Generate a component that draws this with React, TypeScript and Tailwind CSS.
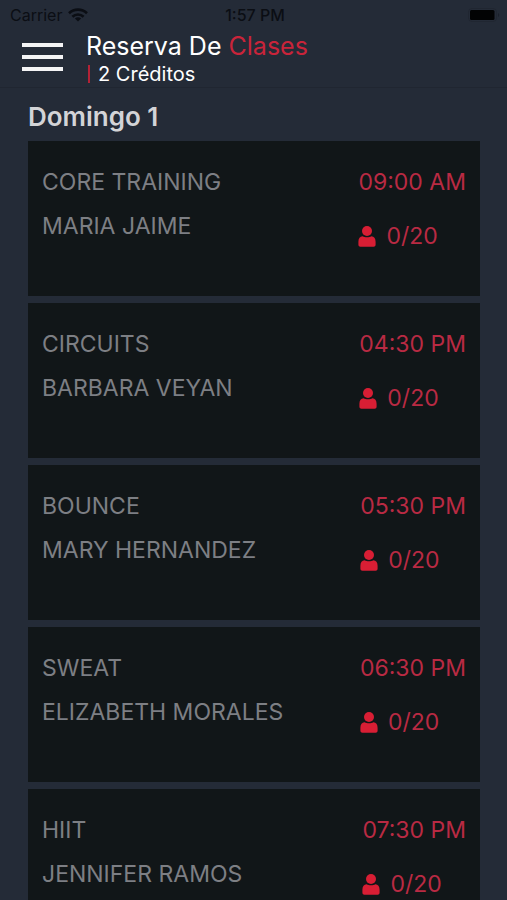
type GymClass = {
  name: string;
  coach: string;
  time: string;
  taken: number;
  capacity: number;
};

const classes: GymClass[] = [
  { name: "CORE TRAINING", coach: "MARIA JAIME", time: "09:00 AM", taken: 0, capacity: 20 },
  { name: "CIRCUITS", coach: "BARBARA VEYAN", time: "04:30 PM", taken: 0, capacity: 20 },
  { name: "BOUNCE", coach: "MARY HERNANDEZ", time: "05:30 PM", taken: 0, capacity: 20 },
  { name: "SWEAT", coach: "ELIZABETH MORALES", time: "06:30 PM", taken: 0, capacity: 20 },
  { name: "HIIT", coach: "JENNIFER RAMOS", time: "07:30 PM", taken: 0, capacity: 20 },
];

function WifiIcon() {
  return (
    <svg viewBox="0 0 20 14" className="h-[14px] w-5" fill="none" stroke="currentColor" strokeWidth="2.6">
      <path d="M1 5.2a13 13 0 0 1 18 0" />
      <path d="M4.4 8.8a8.1 8.1 0 0 1 11.2 0" />
      <path d="M10 13.6 6.9 10.6a4.4 4.4 0 0 1 6.2 0Z" fill="currentColor" stroke="none" />
    </svg>
  );
}

function BatteryIcon() {
  return (
    <svg viewBox="0 0 32 14" className="h-[14px] w-8" fill="none">
      <rect x="0.5" y="0.5" width="28" height="13" rx="3.5" stroke="#202631" />
      <rect x="2" y="2" width="24.5" height="10" rx="1.5" fill="#020304" />
      <path d="M30 5v4c1.6-.5 1.6-3.5 0-4Z" fill="#1b212c" />
    </svg>
  );
}

function PersonIcon() {
  return (
    <svg viewBox="0 0 18 21" className="h-[21px] w-[18px]" fill="#d81e34">
      <circle cx="9" cy="5" r="5" />
      <path d="M4.600 10.300C2 10.500.4 12.500.4 15.800v2.900c0 1.200.8 2 2 2h13.200c1.200 0 2-.8 2-2v-2.900c0-3.300-1.600-5.300-4.200-5.500-1.200.6-2.600 1-4.400 1s-3.200-.4-4.400-1Z" />
    </svg>
  );
}

function StatusBar() {
  return (
    <div className="grid h-[30px] grid-cols-3 items-center pr-[7px] pl-[10px] text-[#0b0e14]">
      <div className="flex items-center gap-[6px] text-base">
        <span>Carrier</span>
        <WifiIcon />
      </div>
      <span className="text-center text-base font-medium">1:57 PM</span>
      <div className="flex justify-end">
        <BatteryIcon />
      </div>
    </div>
  );
}

function ClassCard({ item }: { item: GymClass }) {
  return (
    <li className="flex h-[155px] shrink-0 justify-between bg-[#111618] px-[14px] pt-[23px] text-[23px]">
      <div className="flex flex-col gap-2 text-[#7d7f84]">
        <h3 className="leading-9">{item.name}</h3>
        <p className="leading-9">{item.coach}</p>
      </div>
      <div className="flex flex-col gap-[18px] text-[#b92a43]">
        <time className="leading-9">{item.time}</time>
        <div className="flex items-center gap-[10px]">
          <PersonIcon />
          <span className="leading-9">
            {item.taken}/{item.capacity}
          </span>
        </div>
      </div>
    </li>
  );
}

export default function App() {
  return (
    <div className="flex h-screen flex-col overflow-hidden bg-[#242b37] font-['Inter',sans-serif]">
      <StatusBar />
      <header className="flex h-[58px] shrink-0 gap-[23px] border-b border-[#202631] pl-[22px]">
        <button type="button" aria-label="Menú" className="flex h-[54px] w-[41px] flex-col justify-center gap-2">
          <span className="h-1 w-full bg-[#f4f4f5]" />
          <span className="h-1 w-full bg-[#f4f4f5]" />
          <span className="h-1 w-full bg-[#f4f4f5]" />
        </button>
        <div className="flex flex-col text-white">
          <h1 className="text-[25px] leading-8">
            Reserva De <span className="text-[#c9243a]">Clases</span>
          </h1>
          <p className="flex items-center gap-2 pl-[2px] text-xl leading-6">
            <span className="h-[18px] w-[2px] shrink-0 bg-[#b32236]" />2 Créditos
          </p>
        </div>
      </header>
      <main className="flex min-h-0 flex-1 flex-col pr-[27px] pl-7">
        <h2 className="pt-[13px] pb-2 text-[26px] leading-8 font-semibold text-[#d3d4d7]">Domingo 1</h2>
        <ul className="flex min-h-0 flex-1 flex-col gap-[7px] overflow-hidden">
          {classes.map((item) => (
            <ClassCard key={item.name} item={item} />
          ))}
        </ul>
      </main>
    </div>
  );
}
